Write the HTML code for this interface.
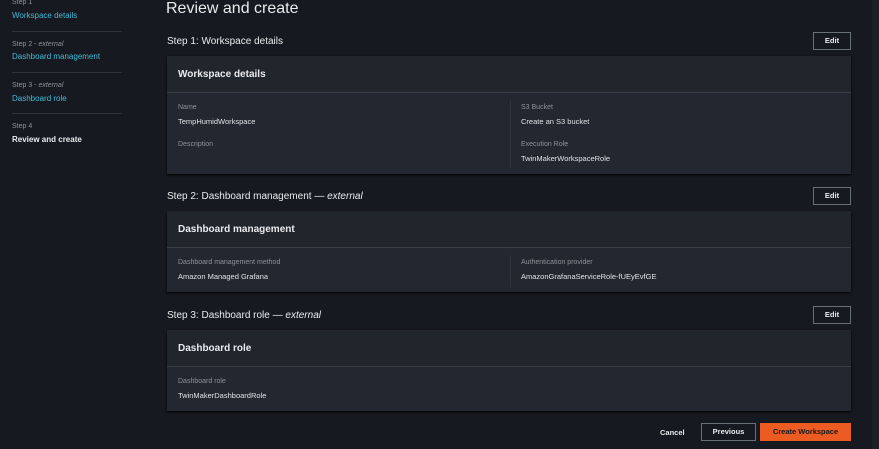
<!DOCTYPE html><html><head><style>
body{margin:0;width:879px;height:449px;background:#16191f;font-family:"Liberation Sans",sans-serif;position:relative;overflow:hidden;color:#d1d5db}
.a{position:absolute;white-space:nowrap}
.sm{font-size:7px;color:#8d9399}
.lk{font-size:8px;color:#44b9d6}
.hr{position:absolute;left:12px;width:110px;height:1px;background:#2f343b}
.card{position:absolute;left:167px;width:684px;background:#232730;box-shadow:0 1px 2px #000}
.ch{height:36px;border-bottom:1px solid #3a3f47;background:#21252c}
.ch b{position:absolute;left:11px;top:13px;font-size:10px;color:#e9ebed}
.lbl{font-size:7px;color:#8d9399}
.val{font-size:7.5px;color:#e0e3e6}
.btn{position:absolute;border:1px solid #687078;background:#16191f;color:#e9ebed;font-size:7.5px;font-weight:bold;text-align:center;box-sizing:border-box}
.h2{font-size:10px;color:#e9ebed}
.vd{position:absolute;left:343px;width:1px;background:#2f343b}
</style></head><body>
<div class="a sm" style="left:12px;top:-1px">Step 1</div>
<div class="a lk" style="left:12px;top:11px">Workspace details</div>
<div class="hr" style="top:31px"></div>
<div class="a sm" style="left:12px;top:41px">Step 2 - <i>external</i></div>
<div class="a lk" style="left:12px;top:52px">Dashboard management</div>
<div class="hr" style="top:72px"></div>
<div class="a sm" style="left:12px;top:82px">Step 3 - <i>external</i></div>
<div class="a lk" style="left:12px;top:94px">Dashboard role</div>
<div class="hr" style="top:113px"></div>
<div class="a sm" style="left:12px;top:123px">Step 4</div>
<div class="a" style="left:12px;top:135px;font-size:8px;color:#e9ebed;font-weight:bold">Review and create</div>

<div class="a" style="left:166px;top:0px;font-size:16px;color:#e9ebed">Review and create</div>

<div class="a h2" style="left:167px;top:36px">Step 1: Workspace details</div>
<div class="btn" style="left:813px;top:32px;width:38px;height:18px;line-height:16px">Edit</div>
<div class="card" style="top:56px;height:118px"><div class="ch"><b>Workspace details</b></div>
<div class="vd" style="top:44px;height:68px"></div>
<div class="a lbl" style="left:11px;top:48px">Name</div>
<div class="a val" style="left:11px;top:61px">TempHumidWorkspace</div>
<div class="a lbl" style="left:11px;top:85px">Description</div>
<div class="a lbl" style="left:354px;top:48px">S3 Bucket</div>
<div class="a val" style="left:354px;top:61px">Create an S3 bucket</div>
<div class="a lbl" style="left:354px;top:85px">Execution Role</div>
<div class="a val" style="left:354px;top:98px">TwinMakerWorkspaceRole</div></div>

<div class="a h2" style="left:167px;top:191px">Step 2: Dashboard management — <i>external</i></div>
<div class="btn" style="left:813px;top:187px;width:38px;height:18px;line-height:16px">Edit</div>
<div class="card" style="top:211px;height:81px"><div class="ch"><b>Dashboard management</b></div>
<div class="vd" style="top:44px;height:32px"></div>
<div class="a lbl" style="left:11px;top:48px">Dashboard management method</div>
<div class="a val" style="left:11px;top:61px">Amazon Managed Grafana</div>
<div class="a lbl" style="left:354px;top:48px">Authentication provider</div>
<div class="a val" style="left:354px;top:61px">AmazonGrafanaServiceRole-fUEyEvfGE</div></div>

<div class="a h2" style="left:167px;top:310px">Step 3: Dashboard role — <i>external</i></div>
<div class="btn" style="left:813px;top:306px;width:38px;height:18px;line-height:16px">Edit</div>
<div class="card" style="top:330px;height:81px"><div class="ch"><b>Dashboard role</b></div>
<div class="a lbl" style="left:11px;top:48px">Dashboard role</div>
<div class="a val" style="left:11px;top:61px">TwinMakerDashboardRole</div></div>

<div class="a" style="left:660px;top:428px;font-size:7.5px;font-weight:bold;color:#e9ebed">Cancel</div>
<div class="btn" style="left:701px;top:423px;width:55px;height:18px;line-height:16px">Previous</div>
<div class="btn" style="left:760px;top:423px;width:91px;height:18px;line-height:16px;background:#ec5b22;border-color:#ec5b22;color:#1a1a1a">Create Workspace</div>
<div class="a" style="left:872px;top:0;width:7px;height:449px;background:#1c1f25"></div>
</body></html>
